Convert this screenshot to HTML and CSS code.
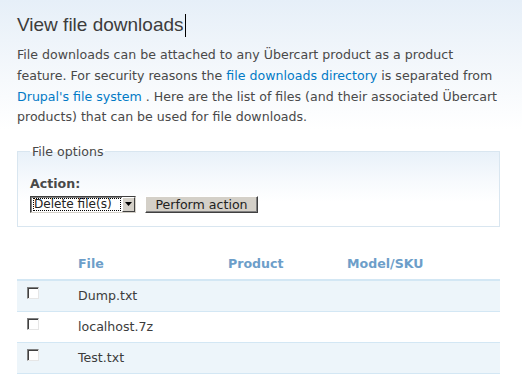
FILE: index.html
```html
<!DOCTYPE html>
<html lang="en">
<head>
    <meta charset="UTF-8">
    <title>View file downloads</title>
    <link rel="stylesheet" href="styles.css">
</head>
<body>
    <div id="content">
        <h2 class="title">View file downloads<span class="caret"></span></h2>
        <p class="intro">File downloads can be attached to any Übercart product as a product feature. For security reasons the <a href="#">file downloads directory</a> is separated from <a href="#">Drupal's file system</a> . Here are the list of files (and their associated Übercart products) that can be used for file downloads.</p>

        <fieldset class="options">
            <legend>File options</legend>
            <div class="form-item">
                <label>Action:</label>
                <div class="action-row">
                    <span class="select">
                        <span class="select-value">Delete file(s)</span>
                        <span class="select-arrow">
                            <svg width="7" height="4" viewBox="0 0 7 4"><path d="M0 0h7L3.5 4z" fill="#000"/></svg>
                        </span>
                    </span>
                    <button class="form-submit">Perform action</button>
                </div>
            </div>
        </fieldset>

        <table class="files">
            <colgroup>
                <col class="col-check">
                <col class="col-file">
                <col class="col-product">
                <col class="col-sku">
            </colgroup>
            <thead>
                <tr>
                    <th></th>
                    <th><a href="#">File</a></th>
                    <th><a href="#">Product</a></th>
                    <th><a href="#">Model/SKU</a></th>
                </tr>
            </thead>
            <tbody>
                <tr class="odd">
                    <td class="check"><span class="checkbox"></span></td>
                    <td>Dump.txt</td>
                    <td></td>
                    <td></td>
                </tr>
                <tr class="even">
                    <td class="check"><span class="checkbox"></span></td>
                    <td>localhost.7z</td>
                    <td></td>
                    <td></td>
                </tr>
                <tr class="odd">
                    <td class="check"><span class="checkbox"></span></td>
                    <td>Test.txt</td>
                    <td></td>
                    <td></td>
                </tr>
            </tbody>
        </table>
    </div>
</body>
</html>
```

FILE: styles.css
```css
html {
    background: #fff;
}
body {
    margin: 0;
    min-height: 386px;
    font-family: "DejaVu Sans", Verdana, sans-serif;
    font-size: 12.6px;
    line-height: 20.8px;
    color: #494949;
    background: linear-gradient(#e6eff8 0, #f6f9fc 80px, #fff 130px);
}
a {
    color: #027ac6;
    text-decoration: none;
}
#content {
    padding: 13px 22px 0 17px;
}
h2.title {
    margin: 0;
    font-family: "Liberation Sans", Arial, sans-serif;
    font-size: 19px;
    font-weight: normal;
    line-height: 24px;
    color: #3c3c3c;
}
.caret {
    display: inline-block;
    width: 1px;
    height: 23px;
    margin-left: 1px;
    vertical-align: -6px;
    background: #000;
}
.intro {
    margin: 8px -3px 0 0;
}

/* File options */
.options {
    margin: 12px 0 0;
    padding: 0 12px 13px;
    border: 1px solid #d9e6f0;
    background: linear-gradient(#e8f1f9 0, #f7fafd 30px, #fff 50px);
}
.options legend {
    padding: 2px 2px 0;
}
.form-item {
    margin-top: 13px;
}
.form-item label {
    display: block;
    font-weight: bold;
    line-height: 16px;
    margin-bottom: 4px;
}
.action-row {
    display: flex;
    align-items: center;
    gap: 9px;
}
.select {
    display: flex;
    align-items: stretch;
    width: 106px;
    height: 17px;
    box-sizing: border-box;
    border: 1px solid;
    border-color: #404040 #d4d0c8 #d4d0c8 #404040;
    background: #fff;
    box-shadow: inset 1px 1px 0 #808080;
}
.select-value {
    flex: 1;
    margin: 1px 1px 1px 2px;
    padding-left: 1px;
    white-space: nowrap;
    outline: 1px dotted #000;
    outline-offset: -1px;
    font-size: 12.1px;
    line-height: 13px;
    color: #222;
}
.select-arrow {
    display: flex;
    align-items: center;
    justify-content: center;
    flex: none;
    width: 13px;
    box-sizing: border-box;
    background: #d4d0c8;
    border: 1px solid;
    border-color: #fff #404040 #404040 #fff;
}
.form-submit {
    height: 17px;
    width: 113px;
    padding: 0;
    font: inherit;
    line-height: 13px;
    color: #222;
    background: #d4d0c8;
    border: 1px solid;
    border-color: #fff #404040 #404040 #fff;
    box-shadow: inset -1px -1px 0 #808080;
}

/* Files table */
.files {
    width: 483px;
    margin-top: 23px;
    border-collapse: collapse;
    table-layout: fixed;
}
.col-check { width: 53px; }
.col-file { width: 150px; }
.col-product { width: 119px; }
.col-sku { width: 161px; }
.files th {
    height: 29px;
    padding: 0 8px;
    text-align: left;
    border-bottom: 2px solid #d3e7f4;
}
.files th a {
    color: #6d9ec9;
}
.files td {
    height: 30px;
    padding: 0 8px;
    border-bottom: 1px solid #d3e7f4;
    color: #3c3c3c;
}
.files tr.odd td {
    background: #edf5fa;
}
.files td.check {
    vertical-align: top;
    padding-top: 6px;
    height: 24px;
}
.checkbox {
    display: block;
    width: 12px;
    height: 12px;
    margin-left: 2px;
    box-sizing: border-box;
    background: #fff;
    border: 1px solid;
    border-color: #808080 #e6e6e6 #e6e6e6 #808080;
    box-shadow: inset 1px 1px 0 #404040;
}
```
